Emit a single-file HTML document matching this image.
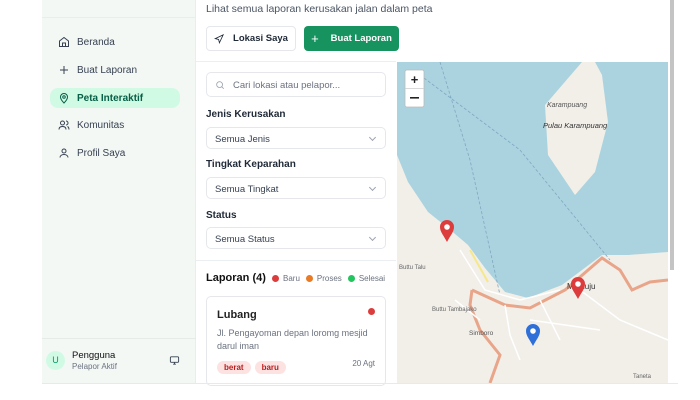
<!DOCTYPE html>
<html><head><style>
*{box-sizing:border-box;margin:0;padding:0}
body{width:700px;height:400px;background:#fff;font-family:"Liberation Sans",sans-serif;position:relative;overflow:hidden;color:#1f2937}
.abs{position:absolute}
.side{left:42px;top:0;width:154px;height:383px;background:#f3f8f5;border-right:1px solid #e8eeea}
.nav{position:absolute;left:8px;width:130px;height:20px;font-size:10px;display:flex;align-items:center;padding-left:8px;color:#374151;border-radius:8px}
.nav svg{margin-right:7px}
.lbl{font-size:10px;font-weight:bold;color:#1f2937;position:absolute;left:206px}
.sel{position:absolute;left:206px;width:180px;height:22px;border:1px solid #e5e7eb;border-radius:5px;font-size:9.5px;padding:6px 8px;background:#fff;color:#374151}
.sel:after{content:"";position:absolute;right:10px;top:7px;width:4px;height:4px;border-right:1px solid #9ca3af;border-bottom:1px solid #9ca3af;transform:rotate(45deg)}
.dot{display:inline-block;width:7px;height:7px;border-radius:50%;margin:0 4px 0 6px;vertical-align:-1px}
.tag{display:inline-block;background:#fde2e2;color:#b91c1c;font-size:8px;font-weight:bold;padding:2px 7px;border-radius:8px;margin-right:4px}
</style></head><body>
<div class="abs side">
  <div style="position:absolute;left:0;top:17px;width:154px;border-top:1px solid #e8eeea"></div>
  <div class="nav" style="top:32px"><svg width="12" height="12" viewBox="0 0 24 24" fill="none" stroke="#374151" stroke-width="2"><path d="M3 10l9-7 9 7v11H3z M9 21v-7h6v7"/></svg>Beranda</div>
  <div class="nav" style="top:60px"><svg width="12" height="12" viewBox="0 0 24 24" fill="none" stroke="#374151" stroke-width="2"><path d="M12 4v16M4 12h16"/></svg>Buat Laporan</div>
  <div class="nav" style="top:88px;background:#d1fae5;color:#065f46;font-weight:bold"><svg width="12" height="12" viewBox="0 0 24 24" fill="none" stroke="#065f46" stroke-width="2"><path d="M12 22s7-7 7-12a7 7 0 0 0-14 0c0 5 7 12 7 12z"/><circle cx="12" cy="10" r="2.5"/></svg>Peta Interaktif</div>
  <div class="nav" style="top:115px"><svg width="12" height="12" viewBox="0 0 24 24" fill="none" stroke="#374151" stroke-width="2"><circle cx="9" cy="8" r="4"/><path d="M2 21c0-4 3-6 7-6s7 2 7 6M16 4a4 4 0 0 1 0 8M19 15c2 1 3 3 3 6"/></svg>Komunitas</div>
  <div class="nav" style="top:143px"><svg width="12" height="12" viewBox="0 0 24 24" fill="none" stroke="#374151" stroke-width="2"><circle cx="12" cy="8" r="4"/><path d="M4 21c0-4 4-6 8-6s8 2 8 6"/></svg>Profil Saya</div>
  <div style="position:absolute;left:0;top:338px;width:154px;border-top:1px solid #e5ece8"></div>
  <div style="position:absolute;left:4px;top:351px;width:19px;height:19px;border-radius:50%;background:#d1fae5;color:#059669;font-size:9px;text-align:center;line-height:19px">U</div>
  <div style="position:absolute;left:30px;top:350px;font-size:9.5px;color:#111">Pengguna</div>
  <div style="position:absolute;left:30px;top:362px;font-size:8px;color:#6b7280">Pelapor Aktif</div>
  <svg style="position:absolute;left:127px;top:355px" width="11" height="11" viewBox="0 0 24 24" fill="none" stroke="#374151" stroke-width="2"><rect x="3" y="4" width="18" height="12" rx="2"/><path d="M9 20h6M12 16v4"/></svg>
</div>
<div class="abs" style="left:206px;top:3px;font-size:10.5px;color:#4b5563">Lihat semua laporan kerusakan jalan dalam peta</div>
<div class="abs" style="left:206px;top:26px;width:90px;height:25px;border:1px solid #e5e7eb;border-radius:4px;font-size:9.5px;font-weight:bold;display:flex;align-items:center;justify-content:center;color:#1f2937"><svg width="10" height="10" viewBox="0 0 24 24" fill="none" stroke="#1f2937" stroke-width="2" style="margin-right:9px"><path d="M3 11l19-9-9 19-2-8z"/></svg>Lokasi Saya</div>
<div class="abs" style="left:304px;top:26px;width:95px;height:25px;background:#16935f;border-radius:4px;font-size:9.5px;font-weight:bold;color:#fff;display:flex;align-items:center;justify-content:center"><span style="font-size:13px;font-weight:normal;margin-right:12px">+</span>Buat Laporan</div>
<div class="abs" style="left:196px;top:61px;width:200px;border-top:1px solid #eceff1"></div>
<div class="abs" style="left:206px;top:72px;width:180px;height:25px;border:1px solid #e5e7eb;border-radius:5px;font-size:9.5px;color:#6b7280;padding:7px 0 0 26px">Cari lokasi atau pelapor...
<svg style="position:absolute;left:8px;top:7px" width="10" height="10" viewBox="0 0 24 24" fill="none" stroke="#9ca3af" stroke-width="2"><circle cx="11" cy="11" r="7"/><path d="M16 16l5 5"/></svg></div>
<div class="lbl" style="top:109px">Jenis Kerusakan</div>
<div class="sel" style="top:127px">Semua Jenis</div>
<div class="lbl" style="top:159px">Tingkat Keparahan</div>
<div class="sel" style="top:177px">Semua Tingkat</div>
<div class="lbl" style="top:210px">Status</div>
<div class="sel" style="top:227px">Semua Status</div>
<div class="abs" style="left:196px;top:260px;width:200px;border-top:1px solid #eceff1"></div>
<div class="abs" style="left:206px;top:272px;font-size:11px;font-weight:bold;color:#111">Laporan (4)</div>
<div class="abs" style="left:266px;top:274px;font-size:8px;color:#6b7280"><span class="dot" style="background:#dc3c3c"></span>Baru<span class="dot" style="background:#ea7a23"></span>Proses<span class="dot" style="background:#22c55e"></span>Selesai</div>
<div class="abs" style="left:206px;top:296px;width:180px;height:90px;border:1px solid #e5e7eb;border-radius:5px;background:#fff">
  <div style="position:absolute;left:10px;top:12px;font-size:11px;font-weight:bold;color:#222">Lubang</div>
  <div style="position:absolute;right:10px;top:11px;width:7px;height:7px;border-radius:50%;background:#dc3c3c"></div>
  <div style="position:absolute;left:10px;top:30px;font-size:9px;color:#6b7280;line-height:12.5px;width:160px">Jl. Pengayoman depan loromg mesjid darul iman</div>
  <div style="position:absolute;left:10px;top:60px"><span class="tag">berat</span><span class="tag">baru</span></div>
  <div style="position:absolute;right:10px;top:62px;font-size:8px;color:#6b7280">20 Agt</div>
</div>
<svg class="abs" style="left:397px;top:62px" width="271" height="321" viewBox="397 62 271 321">
  <rect x="397" y="62" width="271" height="321" fill="#f2efe9"/>
  <path d="M397 62H668V252L628 255L602 255L562 285L528 298L505 292L485 268L468 245L448 228L428 212L408 182L397 155Z" fill="#aad3df"/>
  <path d="M582 62L595 62L602 75L608 122L595 172L575 195L548 155L545 105Z" fill="#f2efe9"/>
  <path d="M440 62L470 160L500 295M420 75L520 150L610 260" stroke="#7fa7c0" stroke-width="0.8" stroke-dasharray="3 2" fill="none"/>
  <path d="M472 290L505 305L530 308L565 290L602 258L620 270L632 290L650 282L668 280M472 290L470 305L480 330L500 355L490 383" stroke="#e8a58a" stroke-width="3" fill="none"/>
  <path d="M460 250L485 290L520 300L560 290M505 305L510 335L520 360M540 300L560 340M580 290L620 320L668 340M530 320L600 330M455 300L480 320" stroke="#fff" stroke-width="1.5" fill="none"/>
  <path d="M470 250L488 282" stroke="#f5e88a" stroke-width="2" fill="none"/>
  <text x="547" y="107" font-size="7" fill="#555" font-style="italic" font-family="Liberation Sans">Karampuang</text>
  <text x="543" y="128" font-size="7.5" fill="#333" font-style="italic" font-family="Liberation Sans">Pulau Karampuang</text>
  <text x="399" y="269" font-size="6" fill="#666" font-family="Liberation Sans">Buttu Talu</text>
  <text x="432" y="311" font-size="6" fill="#666" font-family="Liberation Sans">Buttu Tambajako</text>
  <text x="469" y="335" font-size="6.5" fill="#555" font-family="Liberation Sans">Simboro</text>
  <text x="567" y="289" font-size="8" fill="#333" font-family="Liberation Sans">Mamuju</text>
  <text x="633" y="378" font-size="6" fill="#666" font-family="Liberation Sans">Taneta</text>
  <g transform="translate(447,228)"><path d="M0 14C-3 8-7 4-7 -1A7 7 0 0 1 7 -1C7 4 3 8 0 14Z" fill="#dc3c3c"/><circle cx="0" cy="-1" r="2.8" fill="#fff"/></g>
  <g transform="translate(578,285)"><path d="M0 14C-3 8-7 4-7 -1A7 7 0 0 1 7 -1C7 4 3 8 0 14Z" fill="#dc3c3c"/><circle cx="0" cy="-1" r="2.8" fill="#fff"/></g>
  <g transform="translate(533,332)"><path d="M0 14C-3 8-7 4-7 -1A7 7 0 0 1 7 -1C7 4 3 8 0 14Z" fill="#2e6fd8"/><circle cx="0" cy="-1" r="2.8" fill="#fff"/></g>
  <rect x="405" y="70" width="19" height="37" rx="2" fill="#fff" stroke="#bbb" stroke-width="0.8"/>
  <line x1="405" y1="88.5" x2="424" y2="88.5" stroke="#ccc" stroke-width="0.8"/>
  <text x="414.5" y="84" font-size="13" font-weight="bold" text-anchor="middle" fill="#222" font-family="Liberation Sans">+</text>
  <rect x="410" y="97" width="9" height="1.6" fill="#222"/>
</svg>
<div class="abs" style="left:670px;top:0;width:4px;height:270px;background:#c4c4c4"></div>
<div class="abs" style="left:42px;top:383px;width:636px;border-top:1px solid #e3eaf0"></div>
</body></html>
